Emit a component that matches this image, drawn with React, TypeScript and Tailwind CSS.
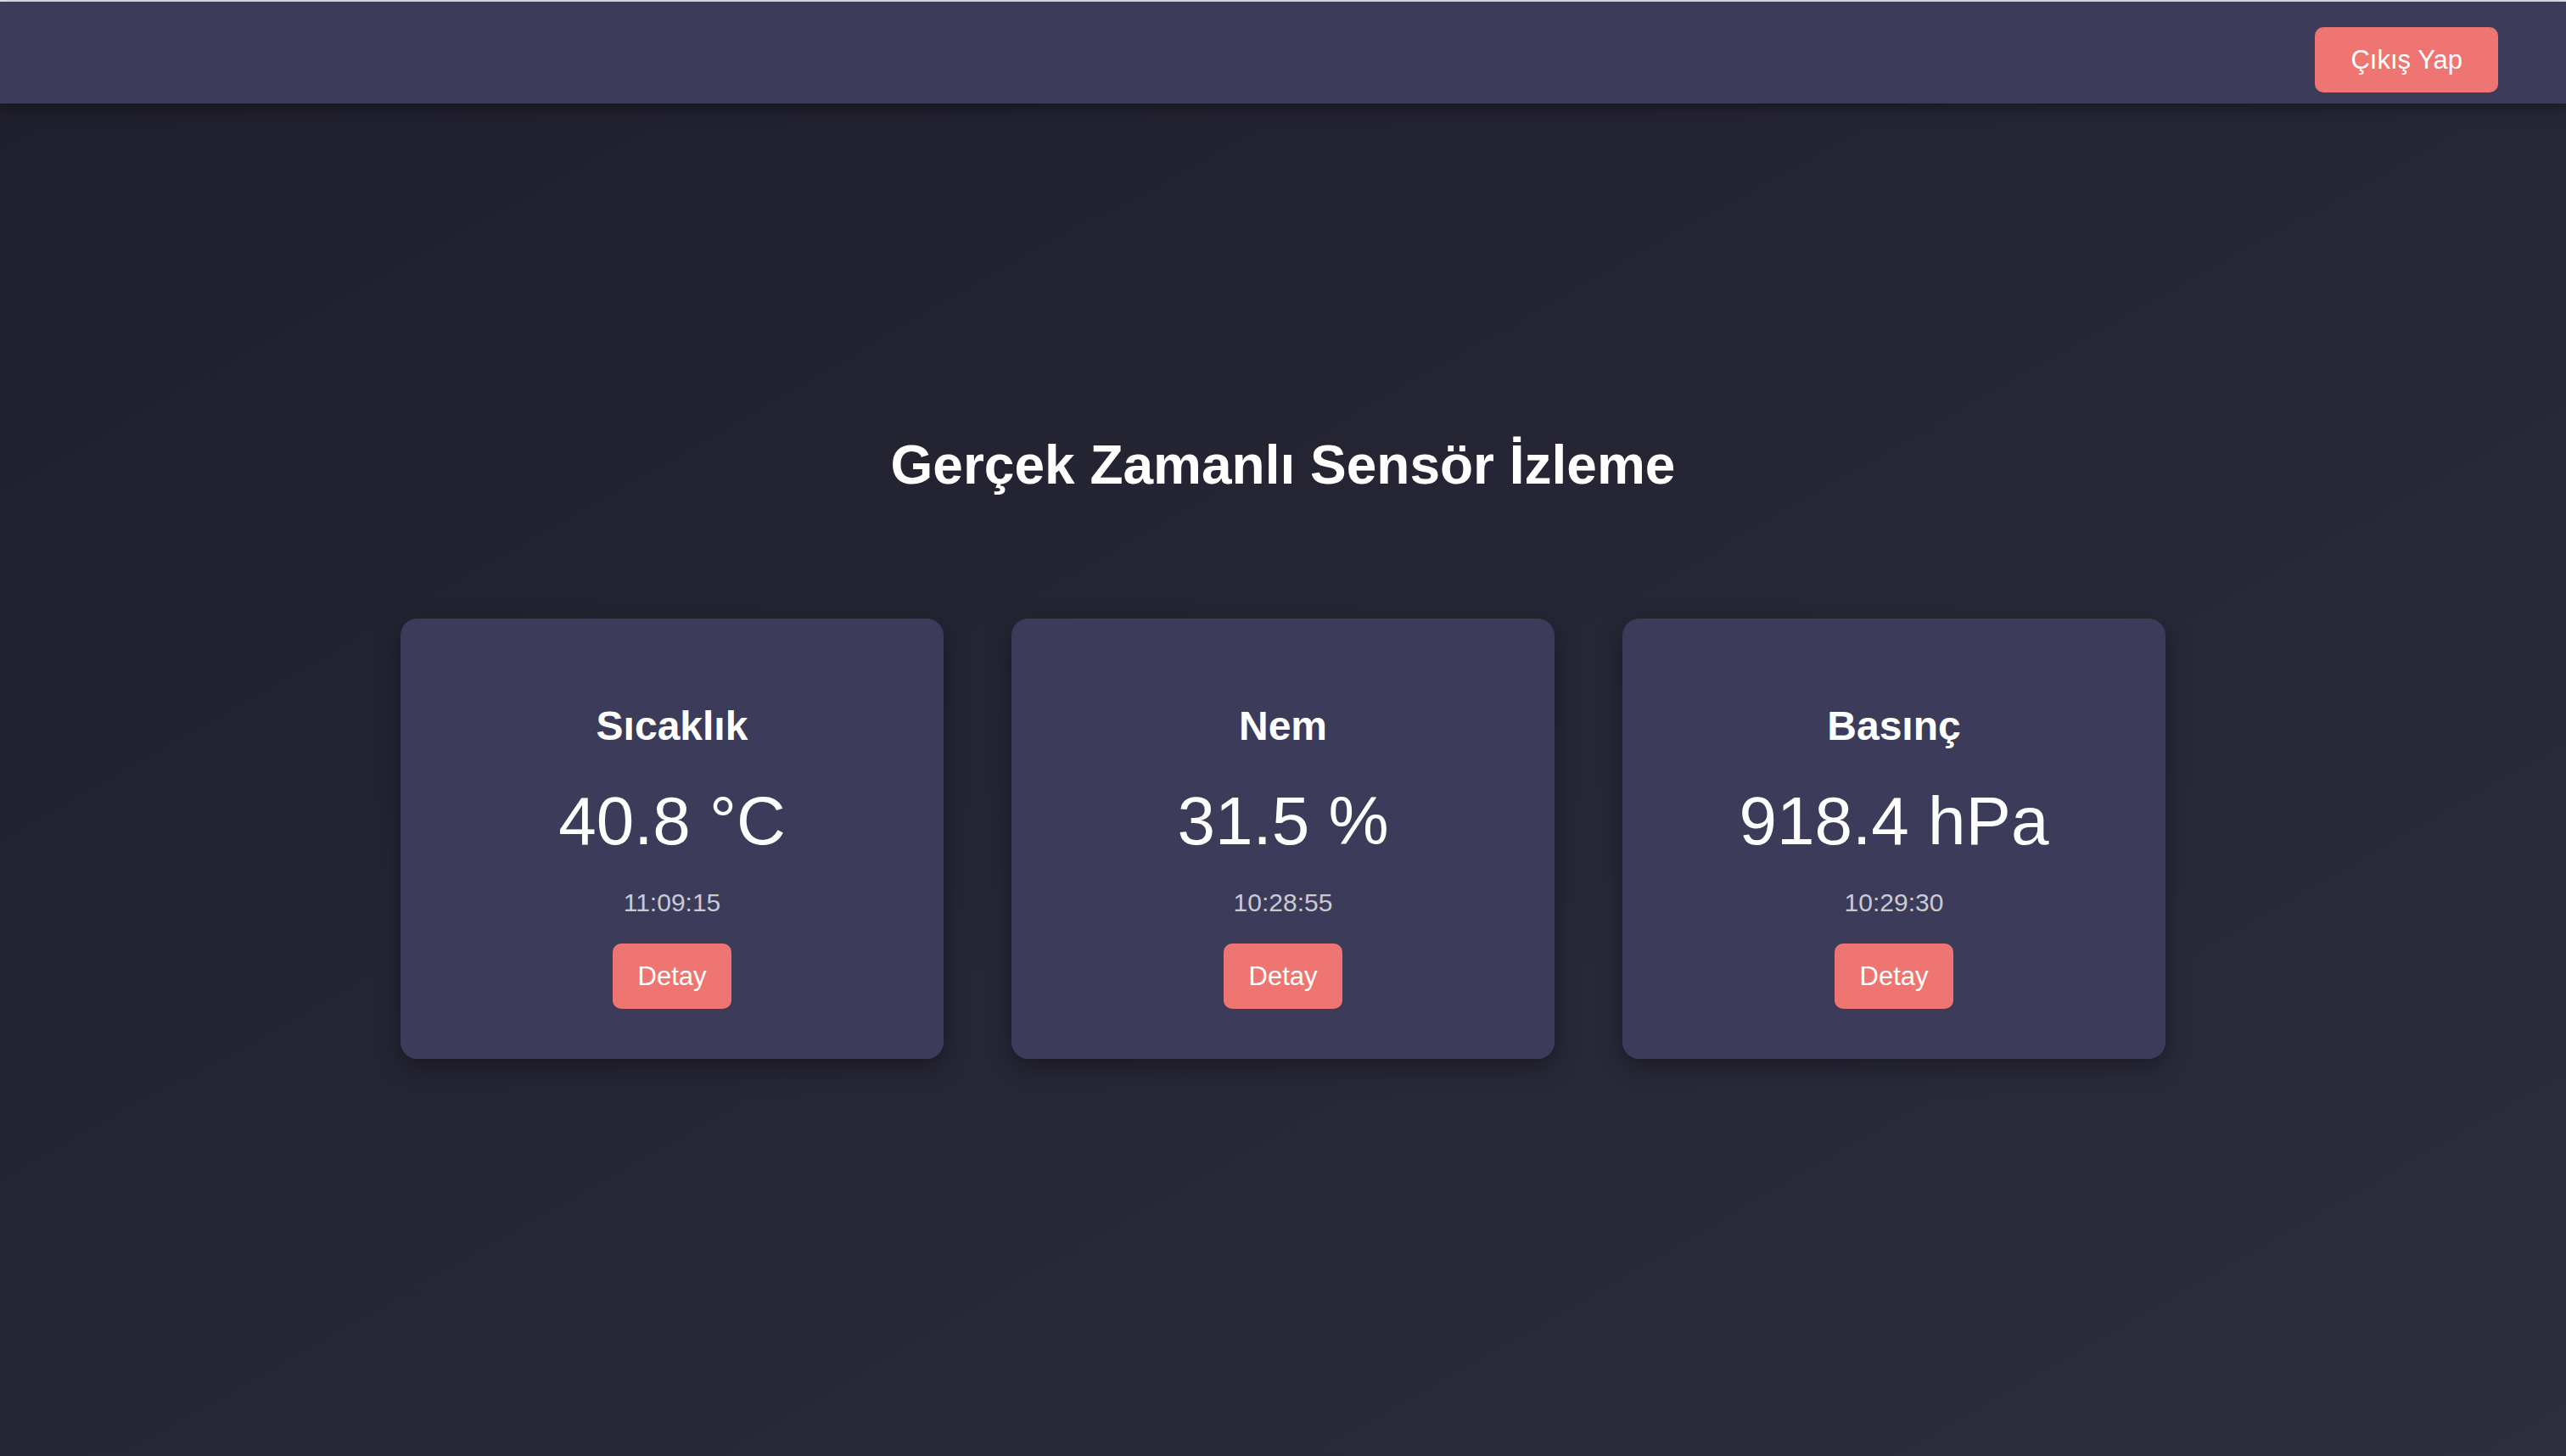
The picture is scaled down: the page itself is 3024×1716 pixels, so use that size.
const sensors = [
  { name: "Sıcaklık", value: "40.8 °C", time: "11:09:15" },
  { name: "Nem", value: "31.5 %", time: "10:28:55" },
  { name: "Basınç", value: "918.4 hPa", time: "10:29:30" },
];

const App = () => {
  return (
    <div className="flex h-screen flex-col bg-linear-to-br from-[#1f1e2c] to-[#2e2d3e] font-['Liberation_Sans',Arial,sans-serif] text-white">
      {/* top strip */}
      <div className="h-[2px] bg-[#e4e4e6]" />

      {/* HEADER */}
      <header className="relative z-10 flex h-[120px] justify-end bg-[#3c3c5a] pt-[30px] pr-[80px] shadow-[0_6px_16px_rgba(0,0,0,0.35)]">
        <button className="h-[77px] rounded-[10px] bg-[#ee7571] px-[42px] text-[31px] leading-[36px] text-white">
          Çıkış Yap
        </button>
      </header>

      {/* CONTENT */}
      <main className="flex flex-col items-center pt-[389px]">
        <h1 className="text-[64px] leading-[74px] font-bold">
          Gerçek Zamanlı Sensör İzleme
        </h1>

        <div className="mt-[144px] grid grid-cols-3 gap-[80px]">
          {sensors.map((s) => (
            <div
              key={s.name}
              className="flex w-[640px] flex-col items-center rounded-[20px] bg-[#3c3c5a] pt-[99px] pb-[59px] shadow-[0_10px_28px_rgba(0,0,0,0.35)]"
            >
              <h2 className="text-[48px] leading-[55px] font-bold">{s.name}</h2>
              <div className="mt-[39px] text-[80px] leading-[92px]">{s.value}</div>
              <div className="mt-[32px] text-[30px] leading-[35px] text-[#cacad3]">
                {s.time}
              </div>
              <button className="mt-[31px] h-[77px] rounded-[10px] bg-[#ee7571] px-[30px] text-[31px] leading-[36px] text-white">
                Detay
              </button>
            </div>
          ))}
        </div>
      </main>
    </div>
  );
};

export default App;
